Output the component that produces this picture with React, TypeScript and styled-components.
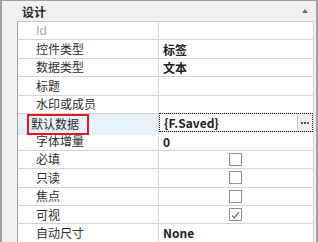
import styled, { createGlobalStyle } from "styled-components";

const GlobalStyle = createGlobalStyle`
  html, body {
    margin: 0;
    padding: 0;
    background: #ffffff;
  }
  #root {
    width: 318px;
    height: 242px;
    overflow: hidden;
  }
`

const Frame = styled.div`
  box-sizing: border-box;
  width: 318px;
  height: 242px;
  background: #f0f0f0;
  border-top: 1px solid #a0a0a0;
  border-left: 2px solid #a0a0a0;
  border-right: 2px solid #a0a0a0;
  display: flex;
  flex-direction: column;
  font-family: "Liberation Sans", "Noto Sans CJK SC", sans-serif;
  font-size: 12px;
  color: #333;
`

const CategoryHeader = styled.div`
  height: 20px;
  display: flex;
  align-items: center;
  justify-content: space-between;
  padding: 0 8px 0 20px;
  font-family: "Noto Sans CJK SC", sans-serif;
  font-weight: 700;
  font-size: 12px;
  color: #2a2a2a;
`

const CollapseArrow = styled.span`
  width: 0;
  height: 0;
  border-left: 3px solid transparent;
  border-right: 3px solid transparent;
  border-bottom: 4px solid #6e6e6e;
  margin-top: -1px;
`

const Body = styled.div`
  flex: 1;
  display: flex;
  padding: 0 2px 0 15px;
  min-height: 0;
`

const Grid = styled.div`
  flex: 1;
  background: #ffffff;
  border-left: 1px solid #a0a0a0;
  border-right: 1px solid #d4d4d4;
  border-top: 1px solid #c8c8c8;
`

const Row = styled.div`
  box-sizing: border-box;
  height: 18.4px;
  display: grid;
  grid-template-columns: 141px 1fr;
  border-bottom: 1px solid #d4d4d4;
`

const Label = styled.div<{ $selected?: boolean; $disabled?: boolean }>`
  display: flex;
  align-items: center;
  padding-left: 18px;
  border-right: 1px solid #d4d4d4;
  background: ${p => (p.$selected ? "#e6f2fb" : "transparent")};
  color: ${p => (p.$disabled ? "#a8a8a8" : "#2e2e2e")};
  font-family: ${p => (p.$disabled ? '"Liberation Sans", sans-serif' : '"Noto Sans CJK SC", sans-serif')};
  font-size: ${p => (p.$disabled ? "13px" : "12px")};
  line-height: 1;
  white-space: nowrap;
  overflow: visible;
`

const Marked = styled.span`
  display: inline-flex;
  align-items: center;
  height: 17px;
  margin-left: -9px;
  padding: 0 8px 0 2px;
  border: 2px solid #e5161d;
`

const Value = styled.div<{ $center?: boolean; $focused?: boolean }>`
  box-sizing: border-box;
  display: flex;
  align-items: center;
  justify-content: ${p => (p.$center ? "center" : "flex-start")};
  padding-left: ${p => (p.$center ? "0" : "4px")};
  font-weight: 700;
  font-size: 12px;
  color: #222;
  border: ${p => (p.$focused ? "1px dotted #1a1a1a" : "none")};
  margin: ${p => (p.$focused ? "-1px 0 0 0" : "0")};
  height: ${p => (p.$focused ? "19.4px" : "auto")};
`

const ValueText = styled.span`
  flex: 1;
  font-family: "Noto Sans CJK SC", "Liberation Sans", sans-serif;
`

const EllipsisButton = styled.span`
  align-self: stretch;
  width: 14px;
  background: #efefef;
  border-left: 1px solid #c4c4c4;
  display: flex;
  align-items: center;
  justify-content: center;
  gap: 1px;
`

const Dot = styled.span`
  width: 2px;
  height: 2px;
  background: #555;
`

const CheckBox = styled.span`
  box-sizing: border-box;
  width: 13px;
  height: 13px;
  border: 1px solid #8e8e8e;
  background: #ffffff;
  display: flex;
  align-items: center;
  justify-content: center;
  margin-left: -1px;
`

type Prop = {
  label: string;
  value?: string;
  check?: boolean;
  disabled?: boolean;
  selected?: boolean;
};

const props: Prop[] = [
  { label: "Id", disabled: true },
  { label: "控件类型", value: "标签" },
  { label: "数据类型", value: "文本" },
  { label: "标题" },
  { label: "水印或成员" },
  { label: "默认数据", value: "{F.Saved}", selected: true },
  { label: "字体增量", value: "0" },
  { label: "必填", check: false },
  { label: "只读", check: false },
  { label: "焦点", check: false },
  { label: "可视", check: true },
  { label: "自动尺寸", value: "None" },
];

const App = () => {
  return (
    <>
      <GlobalStyle />
      <Frame>
        <CategoryHeader>
          <span>设计</span>
          <CollapseArrow />
        </CategoryHeader>
        <Body>
          <Grid>
            {props.map(p => (
              <Row key={p.label}>
                <Label $selected={p.selected} $disabled={p.disabled}>
                  {p.selected ? <Marked>{p.label}</Marked> : p.label}
                </Label>
                {p.check !== undefined ? (
                  <Value $center>
                    <CheckBox>
                      {p.check && (
                        <svg width="9" height="8" viewBox="0 0 9 8">
                          <path d="M1 4.5 L3.3 6.8 L8 1.2" fill="none" stroke="#6a6a6a" strokeWidth="1.2" />
                        </svg>
                      )}
                    </CheckBox>
                  </Value>
                ) : p.selected ? (
                  <Value $focused>
                    <ValueText>{p.value}</ValueText>
                    <EllipsisButton>
                      <Dot />
                      <Dot />
                      <Dot />
                    </EllipsisButton>
                  </Value>
                ) : (
                  <Value>
                    <ValueText>{p.value}</ValueText>
                  </Value>
                )}
              </Row>
            ))}
          </Grid>
        </Body>
      </Frame>
    </>
  );
};

export default App;
